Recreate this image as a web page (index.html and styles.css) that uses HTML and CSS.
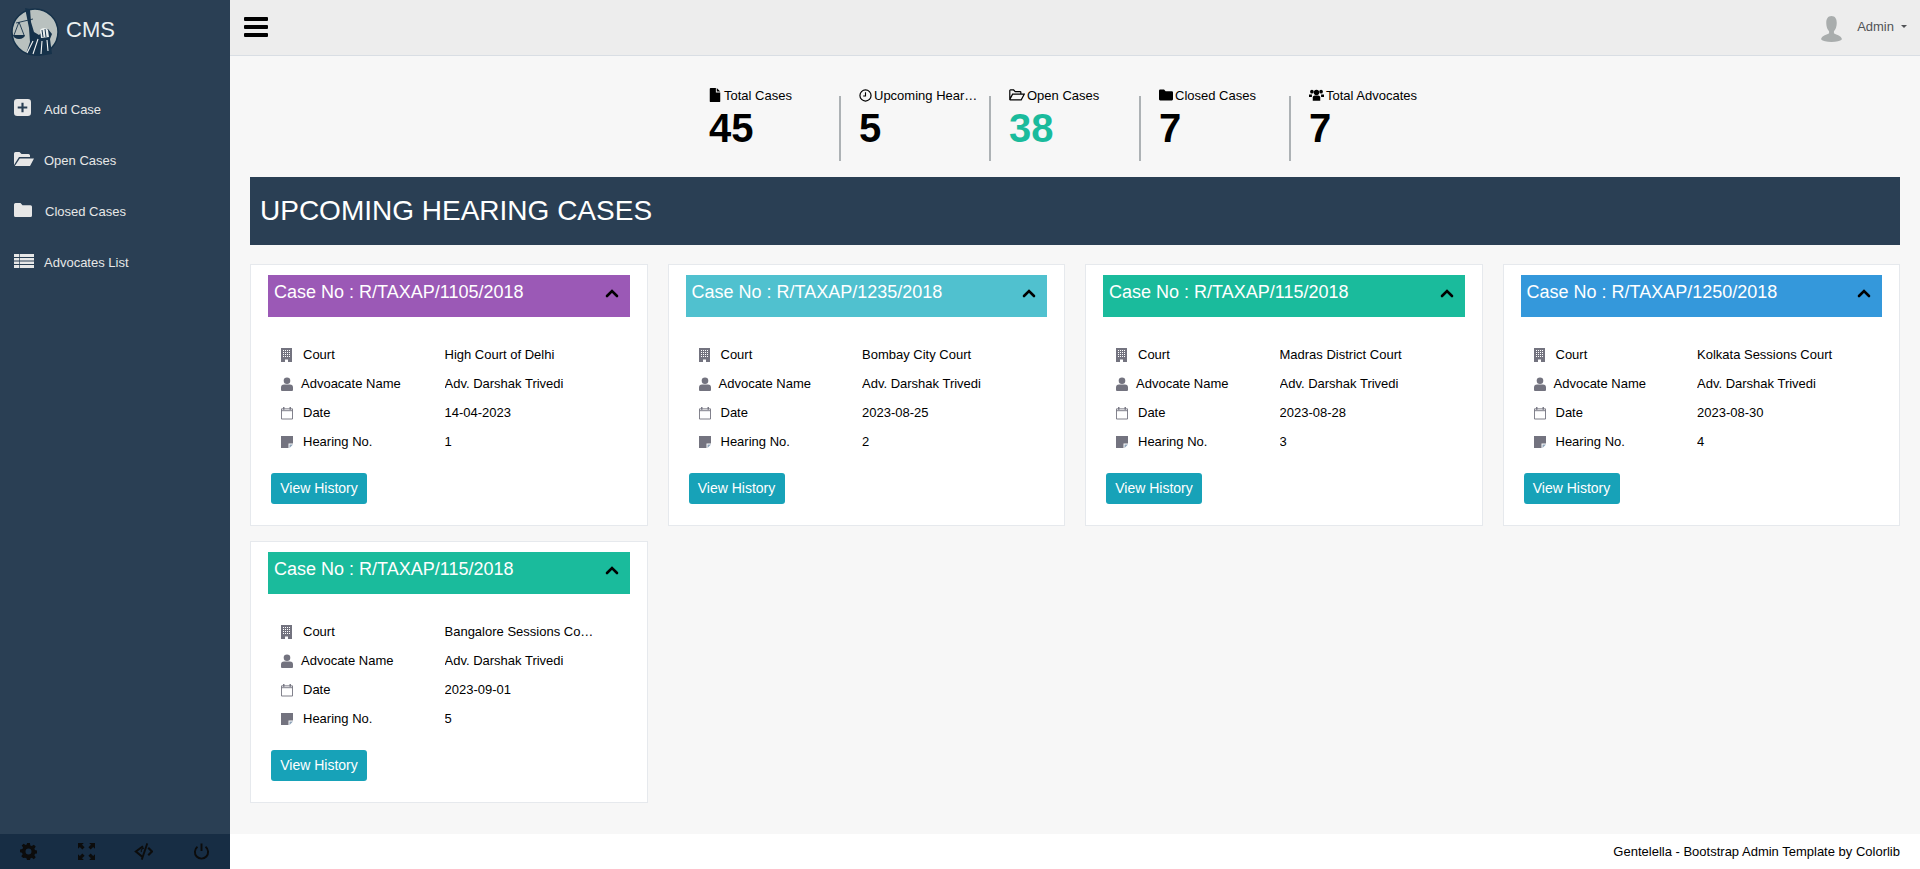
FILE: index.html
```html
<!DOCTYPE html>
<html lang="en">
<head>
<meta charset="utf-8">
<title>CMS</title>
<link rel="stylesheet" href="styles.css">
</head>
<body>
<svg class="defs" width="0" height="0" aria-hidden="true">
  <symbol id="i-plus" viewBox="0 0 16 16"><path fill="currentColor" fill-rule="evenodd" d="M3 0h10a3 3 0 0 1 3 3v10a3 3 0 0 1-3 3H3a3 3 0 0 1-3-3V3a3 3 0 0 1 3-3zM7 3.500v3.500H3.500v2H7v3.500h2V9h3.500V7H9V3.500z"/></symbol>
  <symbol id="i-open" viewBox="0 0 20 16"><path fill="currentColor" d="M0 14V2.500A1.500 1.500 0 0 1 1.500 1h4L7.500 3h7A1.500 1.500 0 0 1 16 4.500V6H5L0 14zM5.800 7.500H20l-4 7.500H0.800z"/></symbol>
  <symbol id="i-open-line" viewBox="0 0 20 16"><path fill="none" stroke="currentColor" stroke-width="1.500" d="M1 13.500V2.500A.8.800 0 0 1 1.800 1.700h4l2 2h6a1 1 0 0 1 1 1V7M1 13.500l3.500-6.500H19l-3.700 7H1.500z"/></symbol>
  <symbol id="i-folder" viewBox="0 0 18 16"><path fill="currentColor" d="M1.500 1h5L8.500 3.200h8A1.500 1.500 0 0 1 18 4.700V13.500A1.500 1.500 0 0 1 16.500 15h-15A1.500 1.500 0 0 1 0 13.500v-11A1.500 1.500 0 0 1 1.500 1z"/></symbol>
  <symbol id="i-list" viewBox="0 0 20 16"><path fill="currentColor" d="M0 1h20v3H0zM0 5h20v2.500H0zM0 8.500h20V11H0zM0 12h20v3H0z"/><path stroke="#2a3f54" stroke-width=".7" d="M5.500 1v14"/></symbol>
  <symbol id="i-file" viewBox="0 0 12 16"><path fill="currentColor" d="M1 0h6v5h5v10a1 1 0 0 1-1 1H1a1 1 0 0 1-1-1V1a1 1 0 0 1 1-1zM8 0l4 4H8z"/></symbol>
  <symbol id="i-clock" viewBox="0 0 14 14"><circle cx="7" cy="7" r="6" fill="none" stroke="currentColor" stroke-width="1.300"/><path fill="none" stroke="currentColor" stroke-width="1.200" d="M7 3.500v4H4.500"/></symbol>
  <symbol id="i-users" viewBox="0 0 18 14"><circle cx="9" cy="4" r="3.200" fill="currentColor"/><circle cx="3.500" cy="3" r="2.200" fill="currentColor"/><circle cx="14.500" cy="3" r="2.200" fill="currentColor"/><path fill="currentColor" d="M4.500 9.500A2.500 2.500 0 0 1 7 7.500h4a2.500 2.500 0 0 1 2.500 2V14h-9zM0 6.500h3.500L3.500 9.500H0zM14.500 6.500H18V9.500H14.500z"/></symbol>
  <symbol id="i-building" viewBox="0 0 12 14"><path fill="currentColor" fill-rule="evenodd" d="M0 0h11v14H7v-2.500H4V14H0zM2 2v1h1V2zM4 2v1h1V2zM6 2v1h1V2zM8 2v1h1V2zM2 4v1h1V4zM4 4v1h1V4zM6 4v1h1V4zM8 4v1h1V4zM2 6v1h1V6zM4 6v1h1V6zM6 6v1h1V6zM8 6v1h1V6zM2 8v1h1V8zM4 8v1h1V8zM6 8v1h1V8zM8 8v1h1V8z"/></symbol>
  <symbol id="i-user" viewBox="0 0 12 14"><circle cx="6" cy="3.800" r="3.300" fill="currentColor"/><path fill="currentColor" d="M0 13V10.500A3 3 0 0 1 3 7.500h6a3 3 0 0 1 3 3V13a1 1 0 0 1-1 1H1a1 1 0 0 1-1-1z"/></symbol>
  <symbol id="i-cal" viewBox="0 0 13 14"><path fill="none" stroke="currentColor" stroke-width="1" d="M.5 2.500h12v11H.5zM.5 4.500h12"/><path stroke="currentColor" stroke-width="1.500" d="M3 0.500v3M10 0.500v3"/></symbol>
  <symbol id="i-note" viewBox="0 0 12 12"><path fill="currentColor" d="M0 0h12v7.500H7.500V12H0z"/><path fill="#8fa3b8" d="M8.500 8.500H12L8.500 12z"/></symbol>
  <symbol id="i-up" viewBox="0 0 14 10"><path fill="none" stroke="currentColor" stroke-width="2.600" stroke-linecap="round" d="M2 8l5-5 5 5"/></symbol>
  <symbol id="i-gear" viewBox="0 0 16 16"><path fill="currentColor" fill-rule="evenodd" d="M6.700 0h2.600l.4 2.300 1.400.6 1.900-1.300 1.800 1.800-1.300 1.900.6 1.400 2.300.4v2.600l-2.300.4-.6 1.400 1.300 1.900-1.800 1.800-1.900-1.300-1.400.6-.4 2.300H6.700l-.4-2.300-1.400-.6L3 14.200l-1.800-1.800 1.300-1.900-.6-1.400L0 8.700V6.100l2.300-.4.600-1.400L1.600 2.400 3.400.6l1.900 1.300 1-.6zM8 5.200a2.800 2.800 0 1 0 0 5.600 2.800 2.800 0 0 0 0-5.600z"/></symbol>
  <symbol id="i-full" viewBox="0 0 16 16"><path fill="currentColor" d="M0 0h5.500L3.800 1.700 6.200 4.100 4.100 6.200 1.700 3.800 0 5.500zM16 0v5.500L14.300 3.800 11.900 6.200 9.800 4.100 12.200 1.700 10.500 0zM0 16v-5.500l1.700 1.700 2.400-2.400 2.100 2.100-2.400 2.400L5.500 16zM16 16h-5.500l1.700-1.700-2.400-2.400 2.100-2.100 2.400 2.400 1.700-1.700z"/></symbol>
  <symbol id="i-eye" viewBox="0 0 18 16"><path fill="none" stroke="currentColor" stroke-width="2" d="M8.500 3L1.800 8l6 5M13.500 4.500L17 8l-3.500 3.500"/><path fill="none" stroke="currentColor" stroke-width="1" d="M9.500 4.800a2.800 2.800 0 0 0-2.500 3.800"/><path fill="currentColor" d="M11.800 0l1.600.7L8.200 16l-1.700-.6z"/></symbol>
  <symbol id="i-power" viewBox="0 0 16 16"><path fill="none" stroke="currentColor" stroke-width="1.800" d="M4.200 3.600a6.200 6.200 0 1 0 7.600 0M8 .5v7"/></symbol>
</svg>
<div class="app">
  <aside class="side">
    <div class="brand">
      <svg class="logo" viewBox="0 0 48 48" role="img" aria-label="CMS logo">
        <circle cx="24" cy="24" r="23" fill="#b9c1bf" stroke="#16324a" stroke-width="1.500"/>
        <path fill="#16324a" d="M14 0l5 1 1 13 3 10 5 3 3-3 6-3 4 5-2 5 2 15-13 2-13-2 4-12-1-14z"/>
        <path fill="#e9edec" d="M29 22a5 5 0 0 1 8 0l1 7-8 1z"/>
        <path fill="none" stroke="#16324a" stroke-width="1" d="M31 22l1 7M34 21l1 8"/>
        <path fill="none" stroke="#f2f4f3" stroke-width="1.100" d="M16 45l6-12M22 46l5-15M30 46l1-13M37 43l-1-11"/>
        <path fill="none" stroke="#16324a" stroke-width=".9" d="M5 15l17-4M8 14L3 27M8 14l5 13"/>
        <path fill="#16324a" d="M2 27h12a6 4 0 0 1-12 0z"/>
      </svg>
      <span class="brand-name">CMS</span>
    </div>
    <nav class="menu">
      <a class="menu-item"><svg class="menu-ico ico-plus"><use href="#i-plus"/></svg><span>Add Case</span></a>
      <a class="menu-item"><svg class="menu-ico ico-open"><use href="#i-open"/></svg><span>Open Cases</span></a>
      <a class="menu-item"><svg class="menu-ico ico-folder"><use href="#i-folder"/></svg><span>Closed Cases</span></a>
      <a class="menu-item"><svg class="menu-ico ico-list"><use href="#i-list"/></svg><span>Advocates List</span></a>
    </nav>
    <div class="side-foot">
      <svg class="foot-ico"><use href="#i-gear"/></svg>
      <svg class="foot-ico"><use href="#i-full"/></svg>
      <svg class="foot-ico foot-wide"><use href="#i-eye"/></svg>
      <svg class="foot-ico"><use href="#i-power"/></svg>
    </div>
  </aside>
  <div class="right">
    <header class="top">
      <div class="burger"><i></i><i></i><i></i></div>
      <div class="user">
        <svg class="avatar" viewBox="0 0 26 28" preserveAspectRatio="none"><path fill="#a9adad" d="M13 0c4.500 0 6.500 3 6.500 7.500 0 4-1.500 7-3.500 9v2c2 1.500 9 2 10 6.500-2 2-7 3-13 3S2 27 0 25c1-4.500 8-5 10-6.500v-2C8 14.500 6.500 11.500 6.500 7.500 6.500 3 8.500 0 13 0z"/></svg>
        <span>Admin</span>
        <span class="caret"></span>
      </div>
    </header>
    <main class="main">
      <section class="stats">
        <div class="stat"><div class="stat-label"><svg class="s-ico s-file"><use href="#i-file"/></svg>Total Cases</div><div class="stat-num">45</div></div>
        <div class="stat stat-line"><div class="stat-label"><svg class="s-ico s-clock"><use href="#i-clock"/></svg><span class="stat-trunc">Upcoming Hearings</span></div><div class="stat-num">5</div></div>
        <div class="stat stat-line"><div class="stat-label"><svg class="s-ico s-open"><use href="#i-open-line"/></svg>Open Cases</div><div class="stat-num stat-green">38</div></div>
        <div class="stat stat-line"><div class="stat-label"><svg class="s-ico"><use href="#i-folder"/></svg>Closed Cases</div><div class="stat-num">7</div></div>
        <div class="stat stat-line"><div class="stat-label"><svg class="s-ico s-users"><use href="#i-users"/></svg>Total Advocates</div><div class="stat-num">7</div></div>
      </section>
      <h1 class="banner">UPCOMING HEARING CASES</h1>
      <section class="cards">
        <article class="card">
          <div class="card-head c-purple"><span>Case No : R/TAXAP/1105/2018</span><svg class="up"><use href="#i-up"/></svg></div>
          <div class="rows">
            <div class="row"><div class="k"><svg class="k-ico"><use href="#i-building"/></svg><span class="k-t">Court</span></div><div class="v">High Court of Delhi</div></div>
            <div class="row"><div class="k"><svg class="k-ico"><use href="#i-user"/></svg><span class="k-u">Advoacate Name</span></div><div class="v">Adv. Darshak Trivedi</div></div>
            <div class="row"><div class="k"><svg class="k-ico"><use href="#i-cal"/></svg><span class="k-t">Date</span></div><div class="v">14-04-2023</div></div>
            <div class="row"><div class="k"><svg class="k-ico"><use href="#i-note"/></svg><span class="k-t">Hearing No.</span></div><div class="v">1</div></div>
          </div>
          <a class="btn">View History</a>
        </article>
        <article class="card">
          <div class="card-head c-cyan"><span>Case No : R/TAXAP/1235/2018</span><svg class="up"><use href="#i-up"/></svg></div>
          <div class="rows">
            <div class="row"><div class="k"><svg class="k-ico"><use href="#i-building"/></svg><span class="k-t">Court</span></div><div class="v">Bombay City Court</div></div>
            <div class="row"><div class="k"><svg class="k-ico"><use href="#i-user"/></svg><span class="k-u">Advocate Name</span></div><div class="v">Adv. Darshak Trivedi</div></div>
            <div class="row"><div class="k"><svg class="k-ico"><use href="#i-cal"/></svg><span class="k-t">Date</span></div><div class="v">2023-08-25</div></div>
            <div class="row"><div class="k"><svg class="k-ico"><use href="#i-note"/></svg><span class="k-t">Hearing No.</span></div><div class="v">2</div></div>
          </div>
          <a class="btn">View History</a>
        </article>
        <article class="card">
          <div class="card-head c-green"><span>Case No : R/TAXAP/115/2018</span><svg class="up"><use href="#i-up"/></svg></div>
          <div class="rows">
            <div class="row"><div class="k"><svg class="k-ico"><use href="#i-building"/></svg><span class="k-t">Court</span></div><div class="v">Madras District Court</div></div>
            <div class="row"><div class="k"><svg class="k-ico"><use href="#i-user"/></svg><span class="k-u">Advocate Name</span></div><div class="v">Adv. Darshak Trivedi</div></div>
            <div class="row"><div class="k"><svg class="k-ico"><use href="#i-cal"/></svg><span class="k-t">Date</span></div><div class="v">2023-08-28</div></div>
            <div class="row"><div class="k"><svg class="k-ico"><use href="#i-note"/></svg><span class="k-t">Hearing No.</span></div><div class="v">3</div></div>
          </div>
          <a class="btn">View History</a>
        </article>
        <article class="card">
          <div class="card-head c-blue"><span>Case No : R/TAXAP/1250/2018</span><svg class="up"><use href="#i-up"/></svg></div>
          <div class="rows">
            <div class="row"><div class="k"><svg class="k-ico"><use href="#i-building"/></svg><span class="k-t">Court</span></div><div class="v">Kolkata Sessions Court</div></div>
            <div class="row"><div class="k"><svg class="k-ico"><use href="#i-user"/></svg><span class="k-u">Advocate Name</span></div><div class="v">Adv. Darshak Trivedi</div></div>
            <div class="row"><div class="k"><svg class="k-ico"><use href="#i-cal"/></svg><span class="k-t">Date</span></div><div class="v">2023-08-30</div></div>
            <div class="row"><div class="k"><svg class="k-ico"><use href="#i-note"/></svg><span class="k-t">Hearing No.</span></div><div class="v">4</div></div>
          </div>
          <a class="btn">View History</a>
        </article>
        <article class="card">
          <div class="card-head c-green"><span>Case No : R/TAXAP/115/2018</span><svg class="up"><use href="#i-up"/></svg></div>
          <div class="rows">
            <div class="row"><div class="k"><svg class="k-ico"><use href="#i-building"/></svg><span class="k-t">Court</span></div><div class="v">Bangalore Sessions Court</div></div>
            <div class="row"><div class="k"><svg class="k-ico"><use href="#i-user"/></svg><span class="k-u">Advocate Name</span></div><div class="v">Adv. Darshak Trivedi</div></div>
            <div class="row"><div class="k"><svg class="k-ico"><use href="#i-cal"/></svg><span class="k-t">Date</span></div><div class="v">2023-09-01</div></div>
            <div class="row"><div class="k"><svg class="k-ico"><use href="#i-note"/></svg><span class="k-t">Hearing No.</span></div><div class="v">5</div></div>
          </div>
          <a class="btn">View History</a>
        </article>
      </section>
    </main>
    <footer class="foot">Gentelella - Bootstrap Admin Template by Colorlib</footer>
  </div>
</div>
</body>
</html>
```
FILE: styles.css
```css
* { box-sizing: border-box; }
html, body { margin: 0; height: 100%; }
body { font-family: "Liberation Sans", Arial, sans-serif; font-size: 13px; color: #000; overflow: hidden; }
.defs { position: absolute; }
.app { display: flex; height: 869px; }

.side { width: 230px; flex: none; background: #2a3f54; display: flex; flex-direction: column; color: #ecf0f1; }
.brand { display: flex; align-items: flex-start; height: 57px; padding: 8px 0 0 11px; gap: 7px; }
.logo { width: 48px; height: 48px; overflow: visible; }
.brand-name { font-size: 22px; color: #ecf0f1; margin-top: 9px; }
.menu { display: flex; flex-direction: column; margin-top: 27px; flex: 1; }
.menu-item { display: flex; align-items: center; height: 51px; padding-left: 14px; font-size: 13px; color: #e7e7e7; }
.menu-ico { display: block; margin-top: -4px; color: #e7e7e7; }
.ico-plus { width: 17px; height: 17px; margin-right: 13px; }
.ico-open { width: 20px; height: 16px; margin-right: 10px; }
.ico-list { width: 20px; height: 16px; margin-right: 10px; }
.ico-folder { width: 18px; height: 16px; margin-right: 13px; }
.side-foot { height: 35px; background: #172d44; display: grid; grid-template-columns: repeat(4, 1fr); justify-items: center; align-items: center; }
.foot-ico { width: 17px; height: 17px; color: #0c0c0c; }
.foot-wide { width: 19px; }

.right { flex: 1; min-width: 0; display: flex; flex-direction: column; }
.top { height: 56px; flex: none; background: #ededed; border-bottom: 1px solid #d9dee4; display: flex; align-items: center; justify-content: space-between; padding: 0 13px 0 15px; }
.burger { display: flex; flex-direction: column; gap: 4px; margin-left: -1px; margin-top: -1px; width: 24px; }
.burger i { display: block; height: 4px; background: #000; border-radius: 1px; }
.user { display: flex; align-items: center; color: #515356; font-size: 13px; margin-bottom: 3px; }
.avatar { width: 21px; height: 26px; margin: 6px 15px 0 0; }
.caret { width: 0; height: 0; border-top: 3px solid #515356; border-left: 3px solid transparent; border-right: 3px solid transparent; margin-left: 7px; }

.main { flex: 1; min-height: 0; background: #f7f7f7; padding: 0 20px; }
.stats { display: flex; padding: 30px 0 0 440px; height: 121px; }
.stat { width: 150px; height: 90px; padding-left: 19px; position: relative; }
.stat-line::before { content: ""; position: absolute; left: -1px; top: 10px; width: 2px; height: 65px; background: #adb2b5; }
.stat-label { display: flex; align-items: center; height: 18px; font-size: 13px; white-space: nowrap; }
.stat-trunc { max-width: 105px; overflow: hidden; text-overflow: ellipsis; }
.s-ico { width: 14px; height: 14px; margin-right: 2px; flex: none; }
.s-file { width: 12px; margin-right: 3px; }
.s-clock { width: 13px; height: 13px; margin-right: 2px; }
.s-open { width: 16px; }
.s-users { width: 15px; }
.stat-num { font-size: 40px; font-weight: 700; line-height: 47px; margin-top: 1px; }
.stat-green { color: #1abb9c; }

.banner { margin: 0; height: 68px; background: #2a3f54; color: #fff; font-size: 28px; font-weight: 400; line-height: 67px; padding-left: 10px; }
.cards { display: grid; grid-template-columns: repeat(4, 1fr); gap: 15px 20px; margin-top: 19px; }
.card { background: #fff; border: 1px solid #e6e9ed; height: 262px; padding: 10px 17px 0 17px; }
.card-head { height: 42px; padding: 5px 11px 0 6px; color: #fff; font-size: 18px; display: flex; justify-content: space-between; align-items: flex-start; line-height: 24px; }
.up { width: 14px; height: 10px; color: #000; margin-top: 8px; }
.c-purple { background: #9b59b6; }
.c-cyan { background: #50c1cf; }
.c-green { background: #1abb9c; }
.c-blue { background: #3498db; }
.rows { margin-top: 23px; padding-left: 13px; }
.row { display: grid; grid-template-columns: 163.500px 1fr; height: 29px; align-items: center; }
.k { display: flex; align-items: center; }
.k-ico { width: 12px; height: 14px; color: #73737f; flex: none; }
.k-t { margin-left: 10px; }
.k-u { margin-left: 8px; }
.v { white-space: nowrap; overflow: hidden; text-overflow: ellipsis; max-width: 150px; }
.btn { display: inline-block; margin: 17px 0 0 3px; width: 96px; height: 31px; line-height: 30px; text-align: center; background: #17a2b8; color: #fff; border-radius: 3px; font-size: 14px; }

.foot { height: 35px; flex: none; background: #fff; text-align: right; padding: 0 20px 0 0; line-height: 36px; font-size: 13px; }
```
